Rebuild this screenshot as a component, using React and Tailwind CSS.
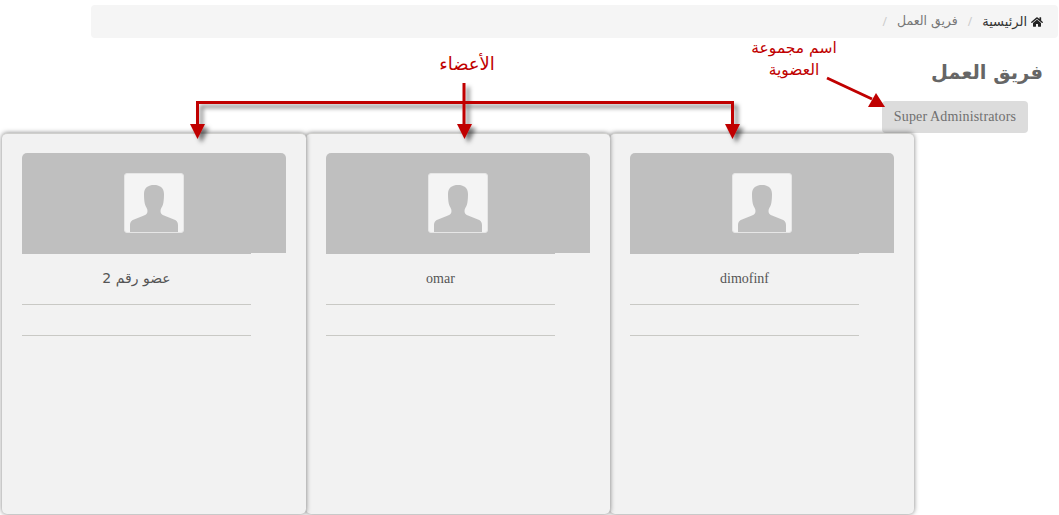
import React from "react";
import { FaHome } from "react-icons/fa";

const arabic = "font-['DejaVu_Sans',sans-serif]";
const members = [
  { name: "dimofinf", latin: true },
  { name: "omar", latin: true },
  { name: "عضو رقم 2", latin: false },
];

function Avatar() {
  return (
    <div className="w-[60px] h-[60px] rounded-[3px] bg-[#f4f4f4] border border-[#e6e6e6]">
      <svg width="58" height="58" viewBox="1 1 58 58" fill="#bfbfbf">
        <path d="M30 12C24.500 12 20 14.500 20 21C20 25 20.300 29 21 31.500C21.800 34 23.500 35.500 23.500 38C23.500 40 22.500 41.500 20 42.500L10 46.500C7.500 47.500 6 49 6 52V59H54V52C54 49 52.500 47.500 50 46.500L40 42.500C37.500 41.500 36.500 40 36.500 38C36.500 35.500 38.200 34 39 31.500C39.700 29 40 25 40 21C40 14.500 35.500 12 30 12Z" />
      </svg>
    </div>
  );
}

function MemberCard({ member }) {
  return (
    <div className="w-[304px] h-[381px] shrink-0 rounded-[5px] bg-[#f2f2f2] pt-[19px] px-[20px] border-t border-[#cfcfcc] shadow-[0_0_5px_rgba(0,0,0,0.5)]">
      <div className="h-[100px] rounded-t-[5px] bg-[#bfbfbf] flex items-center justify-center">
        <Avatar />
      </div>
      <div className="w-[229px] mr-[35px] h-px bg-[#bfbfbf]" />
      <div className="w-[229px] mr-[35px]">
        <div
          className={`h-[51px] border-b border-[#c9c9c5] text-center text-[#555] text-[14px] leading-[20px] ${
            member.latin ? "pt-[15px] font-['Liberation_Serif',serif]" : `pt-[14px] ${arabic}`
          }`}
        >
          {member.name}
        </div>
        <div className="h-[31px] border-b border-[#c9c9c5]" />
      </div>
    </div>
  );
}

function Annotations() {
  return (
    <svg className="absolute left-0 top-0 pointer-events-none" width="1059" height="515" fill="none">
      <defs>
        <filter id="arrowShadow" x="-10%" y="-10%" width="120%" height="130%">
          <feDropShadow dx="4" dy="4" stdDeviation="2" floodColor="#000" floodOpacity="0.5" />
        </filter>
      </defs>
      <g filter="url(#arrowShadow)">
        <path d="M197.500 126V102.500H732.500V126" stroke="#c00000" strokeWidth="3" />
        <path d="M464 83V126" stroke="#c00000" strokeWidth="3" />
        <path d="M190 124H205L197.500 139Z" fill="#c00000" />
        <path d="M457 124H472L464.500 139Z" fill="#c00000" />
        <path d="M725 124H740L732.500 139Z" fill="#c00000" />
      </g>
      <path d="M827 78L872 99" stroke="#c00000" strokeWidth="3" />
      <path d="M876 93L885 107L868 107Z" fill="#c00000" />
    </svg>
  );
}

export default function App() {
  return (
    <div dir="rtl" className="relative w-[1059px] h-[515px] overflow-hidden bg-white">
      <div className="ml-[91px] mr-px mt-[5px] h-[33px] rounded-[4px] bg-[#f5f5f5] flex items-center pr-[15px] text-[13px] gap-[10px]">
        <span className={`${arabic} flex items-center gap-[4px] text-[#333]`}>
          <FaHome className="w-[12px] h-[12px] text-[#222]" />
          الرئيسية
        </span>
        <span className="text-[#ccc] text-[12px]">/</span>
        <span className={`${arabic} text-[#777] text-[12.5px]`}>فريق العمل</span>
        <span className="text-[#ccc] text-[12px]">/</span>
      </div>
      <h1 className={`${arabic} mt-[23px] mr-[16px] text-[19.5px] leading-[24px] font-bold text-[#666]`}>فريق العمل</h1>
      <div className="mt-[16px] mr-[31px] flex">
        <div className="w-[146px] h-[32px] rounded-[4px] bg-[#dcdcdc] text-center font-['Liberation_Serif',serif] text-[14px] leading-[32px] tracking-[0.15px] text-[#707070]">
          Super Administrators
        </div>
      </div>
      <div className="mr-[145px] flex">
        {members.map((m) => (
          <MemberCard key={m.name} member={m} />
        ))}
      </div>
      <Annotations />
      <div className={`${arabic} absolute left-[734px] top-[37px] w-[120px] text-center text-[15.5px] leading-[22px] text-[#c00000]`}>
        اسم مجموعة
        <br />
        العضوية
      </div>
      <div className={`${arabic} absolute left-[427px] top-[53px] w-[80px] text-center text-[18px] leading-[22px] text-[#c00000]`}>
        الأعضاء
      </div>
    </div>
  );
}
